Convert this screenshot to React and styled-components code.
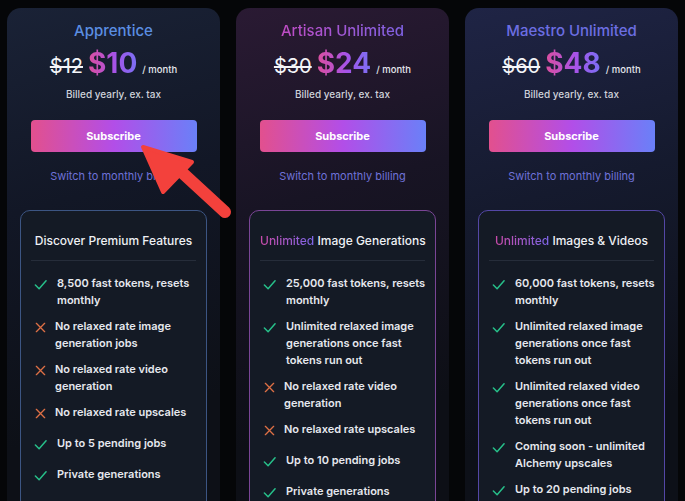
import React from 'react';
import styled, { createGlobalStyle, css } from 'styled-components';

const Global = createGlobalStyle`
  html, body { margin: 0; padding: 0; background: #050608; overflow: hidden; }
  body { font-family: Inter, "Noto Sans", sans-serif; -webkit-font-smoothing: antialiased; }
`;

const grad = css`
  background: linear-gradient(90deg, #e0509a 0%, #b052e6 50%, #6f7cf6 100%);
  -webkit-background-clip: text;
  background-clip: text;
  color: transparent;
`;

const Page = styled.div`
  position: relative;
  display: grid;
  grid-template-columns: repeat(3, 213px);
  gap: 16px;
  padding: 8px 7px;
  height: 501px;
  box-sizing: border-box;
`;

const Card = styled.div`
  border-radius: 14px;
  padding: 14px 13px 0;
  height: 520px;
  display: flex;
  flex-direction: column;
  align-items: center;
  background: ${p => p.$bg};
`;

const Title = styled.div`
  font-size: 15px;
  font-weight: 500;
  line-height: 18px;
  color: ${p => p.$color || 'transparent'};
  ${p => p.$grad && grad}
  background-image: ${p => p.$grad ? 'linear-gradient(90deg, #c04cc4, #7f62e4)' : 'none'};
`;

const PriceRow = styled.div`
  display: flex;
  align-items: baseline;
  margin-top: 6px;
  height: 36px;
`;

const Old = styled.span`
  font-size: 20px;
  color: #f4f5f8;
  text-decoration: line-through;
  text-decoration-thickness: 1.5px;
  margin-right: 5px;
`;

const Now = styled.span`
  font-size: 28px;
  font-weight: 700;
  ${grad}
  background-image: linear-gradient(90deg, #dc4f9e 0%, #a653e8 55%, #7a70f4 100%);
`;

const Per = styled.span`
  font-size: 9.5px;
  font-weight: 500;
  color: #e4e6ec;
  margin-left: 5px;
`;

const Billed = styled.div`
  font-size: 10px;
  font-weight: 500;
  color: #cfd2da;
  margin-top: 6px;
`;

const Button = styled.button`
  margin-top: 20px;
  width: 166px;
  height: 32px;
  border: 0;
  border-radius: 4px;
  background: linear-gradient(90deg, #e2508e 0%, #b24ee8 50%, #6a80f8 100%);
  color: #fff;
  font-family: inherit;
  font-size: 11px;
  font-weight: 700;
`;

const Switch = styled.div`
  margin-top: 17px;
  font-size: 11px;
  color: #6f72d8;
`;

const Box = styled.div`
  margin-top: 27px;
  align-self: stretch;
  border: 1px solid ${p => p.$border};
  border-radius: 10px;
  background: #141a25;
  padding: 22px 5px 0 13px;
  flex: 1;
`;

const BoxHead = styled.div`
  text-align: center;
  font-size: 12px;
  font-weight: 500;
  color: #eef0f4;
  white-space: nowrap;
  padding-bottom: 12px;
  border-bottom: 1px solid #262d3a;
  margin: 0 5px 12px -3px;
`;

const Hl = styled.span`
  ${grad}
  background-image: linear-gradient(90deg, #c94aa8, #7d66e8);
`;

const List = styled.ul`
  list-style: none;
  margin: 0;
  padding: 0;
  display: flex;
  flex-direction: column;
  gap: 7px;
`;

const Item = styled.li`
  display: flex;
  align-items: flex-start;
  min-height: 24px;
  gap: ${p => (p.$ok ? '10px' : '8px')};
  font-size: 11px;
  font-weight: 600;
  line-height: 17px;
  color: #e6e8ee;

  span { padding-top: 2px; }
`;

const Icon = styled.svg`
  flex: none;
  width: 13px;
  height: 13px;
  margin-top: 5px;
`;

const Check = () => (
  <Icon viewBox="0 0 14 14" fill="none" stroke="#27c08a" strokeWidth="1.6" strokeLinecap="round" strokeLinejoin="round">
    <path d="M1.5 7.5 L5.5 11.5 L13 3" />
  </Icon>
);

const Cross = () => (
  <Icon viewBox="0 0 14 14" fill="none" stroke="#dd6f45" strokeWidth="1.4" strokeLinecap="round">
    <path d="M2.5 2.5 L11.5 11.5 M11.5 2.5 L2.5 11.5" />
  </Icon>
);

const Arrow = styled.svg`
  position: absolute;
  left: 130px;
  top: 132px;
  width: 110px;
  height: 100px;
  pointer-events: none;
`;

const plans = [
  {
    name: 'Apprentice',
    color: '#5b8ee2',
    old: '$12',
    price: '$10',
    bg: 'linear-gradient(165deg, #1a2236 0%, #121726 35%, #0d1017 75%)',
    border: '#3c5583',
    head: <>Discover Premium Features</>,
    features: [
      [1, '8,500 fast tokens, resets monthly'],
      [0, 'No relaxed rate image generation jobs'],
      [0, 'No relaxed rate video generation'],
      [0, 'No relaxed rate upscales'],
      [1, 'Up to 5 pending jobs'],
      [1, 'Private generations'],
    ],
  },
  {
    name: 'Artisan Unlimited',
    grad: true,
    old: '$30',
    price: '$24',
    bg: 'linear-gradient(165deg, #2a1a33 0%, #181424 35%, #0d0f16 75%)',
    border: '#7a4596',
    head: <><Hl>Unlimited</Hl> Image Generations</>,
    features: [
      [1, '25,000 fast tokens, resets monthly'],
      [1, 'Unlimited relaxed image generations once fast tokens run out'],
      [0, 'No relaxed rate video generation'],
      [0, 'No relaxed rate upscales'],
      [1, 'Up to 10 pending jobs'],
      [1, 'Private generations'],
    ],
  },
  {
    name: 'Maestro Unlimited',
    color: '#6c6ee2',
    old: '$60',
    price: '$48',
    bg: 'linear-gradient(165deg, #1f2445 0%, #151a2e 35%, #0d1018 75%)',
    border: '#5447a6',
    head: <><Hl>Unlimited</Hl> Images &amp; Videos</>,
    features: [
      [1, '60,000 fast tokens, resets monthly'],
      [1, 'Unlimited relaxed image generations once fast tokens run out'],
      [1, 'Unlimited relaxed video generations once fast tokens run out'],
      [1, 'Coming soon - unlimited Alchemy upscales'],
      [1, 'Up to 20 pending jobs'],
      [1, 'Private generations'],
    ],
  },
];

export default function App() {
  return (
    <>
      <Global />
      <Page>
        {plans.map(p => (
          <Card key={p.name} $bg={p.bg}>
            <Title $color={p.color} $grad={p.grad}>{p.name}</Title>
            <PriceRow>
              <Old>{p.old}</Old>
              <Now>{p.price}</Now>
              <Per>/ month</Per>
            </PriceRow>
            <Billed>Billed yearly, ex. tax</Billed>
            <Button>Subscribe</Button>
            <Switch>Switch to monthly billing</Switch>
            <Box $border={p.border}>
              <BoxHead>{p.head}</BoxHead>
              <List>
                {p.features.map(([ok, t]) => (
                  <Item key={t} $ok={ok}>
                    {ok ? <Check /> : <Cross />}
                    <span>{t}</span>
                  </Item>
                ))}
              </List>
            </Box>
          </Card>
        ))}
        <Arrow viewBox="0 0 110 100">
          <path d="M95 80 L45 34" stroke="#f3413c" strokeWidth="12" strokeLinecap="round" />
          <path d="M13 15 L62 30 L33 60 Z" fill="#f3413c" stroke="#f3413c" strokeWidth="4" strokeLinejoin="round" />
        </Arrow>
      </Page>
    </>
  );
}
